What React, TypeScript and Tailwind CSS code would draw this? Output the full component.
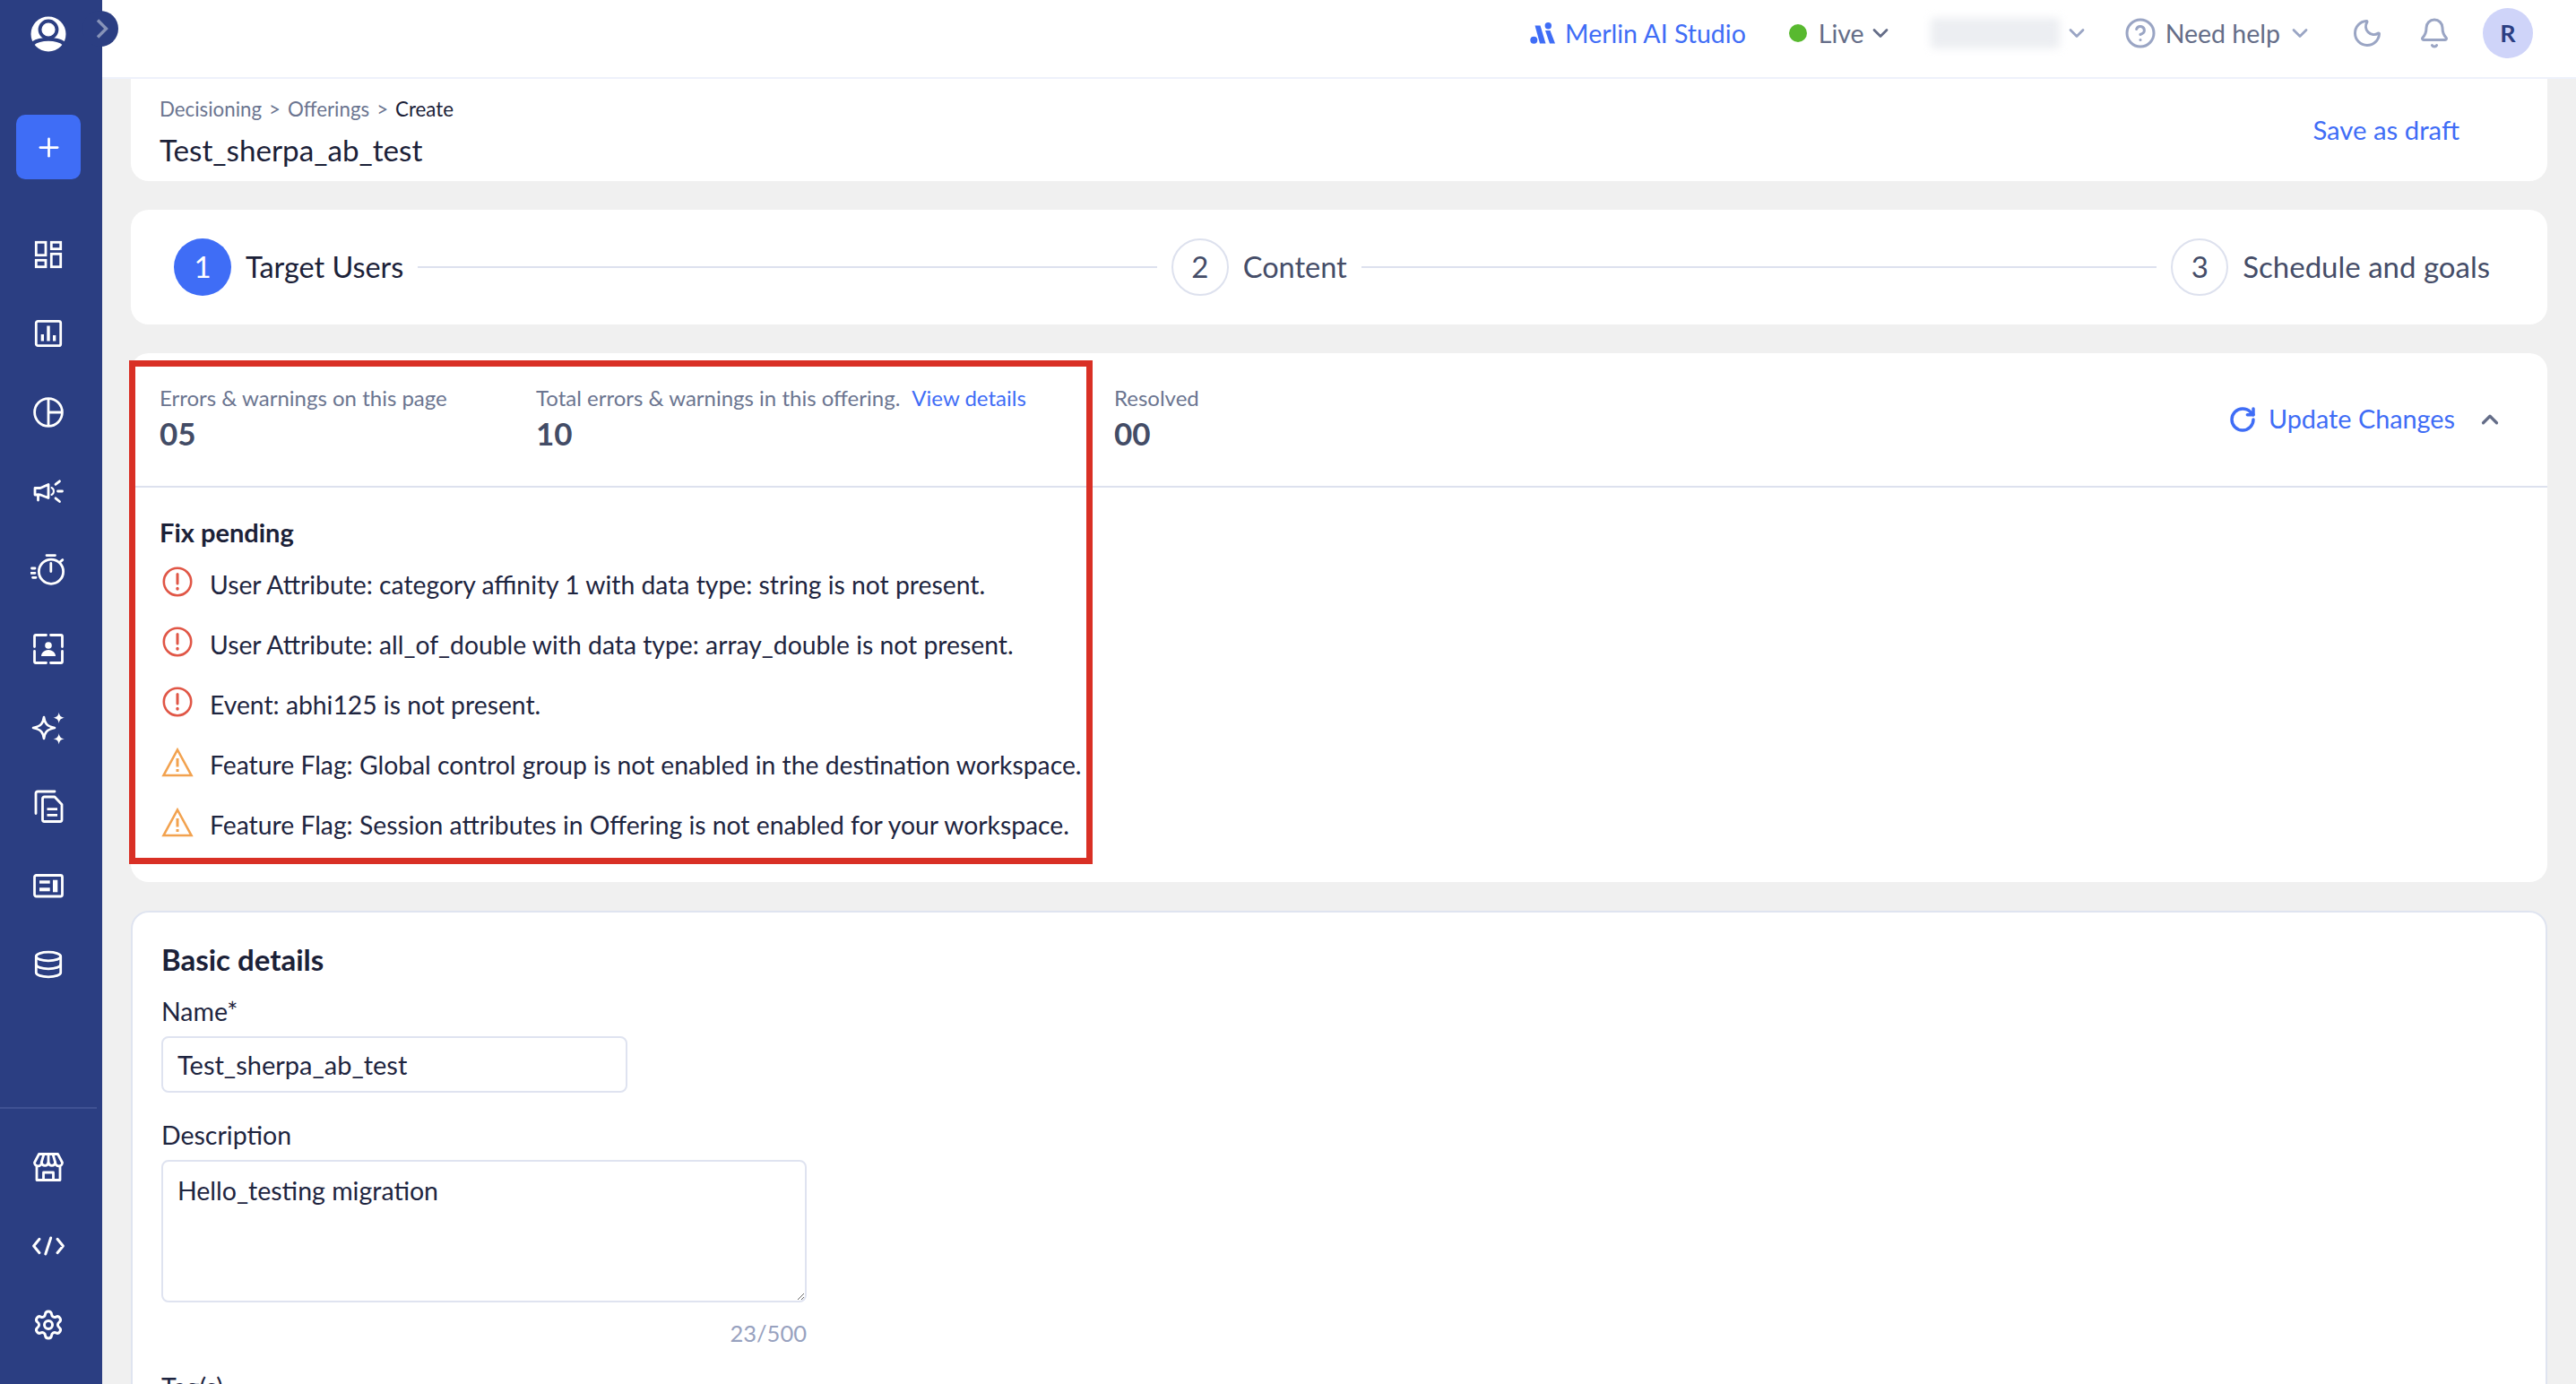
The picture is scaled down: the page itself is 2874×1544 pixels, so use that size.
import React from 'react';
import { ChevronDown, ChevronUp, CircleHelp, Moon, Bell, RotateCw, Plus, Settings } from 'lucide-react';

const Ico: React.FC<{ children: React.ReactNode }> = ({ children }) => (
  <svg width="40" height="40" viewBox="0 0 40 40" fill="none" stroke="white" strokeWidth="2.8" strokeLinecap="round" strokeLinejoin="round">
    {children}
  </svg>
);

const UserLogo = () => (
  <svg width="40" height="40" viewBox="0 0 40 40">
    <circle cx="20" cy="20" r="19.5" fill="white" />
    <circle cx="20" cy="15" r="9.5" fill="white" stroke="#2b3e82" strokeWidth="3.8" />
    <path d="M3 31.5 C11 25 29 25 37 31.5 L37 29 C30 24 10 24 3 29 Z" fill="#2b3e82" stroke="#2b3e82" strokeWidth="2.4" />
  </svg>
);

const topIcons: React.ReactNode[] = [
  <Ico key="dash">
    <g strokeLinecap="butt" strokeLinejoin="miter">
      <rect x="6.3" y="6.3" width="10.7" height="14.4" />
      <rect x="6.3" y="26.3" width="10.7" height="7.4" />
      <rect x="23.3" y="6.3" width="10.4" height="7.4" />
      <rect x="23.3" y="19.3" width="10.4" height="14.4" />
    </g>
  </Ico>,
  <Ico key="bars">
    <rect x="6.3" y="6.3" width="27.4" height="27.4" rx="2" />
    <g fill="white" stroke="none">
      <rect x="11.7" y="21" width="3.3" height="7.5" />
      <rect x="18.3" y="11.5" width="3.4" height="17" />
      <rect x="25" y="22" width="3.3" height="6.5" />
    </g>
  </Ico>,
  <Ico key="pie">
    <circle cx="20" cy="20" r="15.4" />
    <path d="M20 5 V35 M20 20 H35" strokeLinecap="butt" />
  </Ico>,
  <Ico key="mega">
    <path d="M5 16.5 H11 L20 12.5 V27.5 L11 24 H5 Z" />
    <path d="M8.5 24 V30" />
    <path d="M23.5 16 a4.5 4.5 0 0 1 0 8" strokeWidth="2" />
    <path d="M28 12.3 L32.5 8.8 M30.5 20 H35.5 M28 27.8 L32.5 31.5" />
  </Ico>,
  <Ico key="timer">
    <circle cx="23" cy="21.7" r="13.6" />
    <path d="M18 3.6 H27.5 M22.8 12.5 V21.5 M33 10.8 L35.8 8.6" />
    <path d="M1.5 18 H5 M0.8 23.3 H5 M2.5 28.3 H6" />
  </Ico>,
  <Ico key="scan">
    <path d="M17.5 4.5 H6 a1.5 1.5 0 0 0 -1.5 1.5 V17.5" />
    <path d="M22.5 4.5 H34 a1.5 1.5 0 0 1 1.5 1.5 V17.5" />
    <path d="M4.5 22.5 V34 a1.5 1.5 0 0 0 1.5 1.5 H17.5" />
    <path d="M35.5 22.5 V34 a1.5 1.5 0 0 1 -1.5 1.5 H22.5" />
    <circle cx="20" cy="16" r="3.8" fill="white" stroke="none" />
    <path d="M12 28 c0 -4 4 -7 8 -7 s8 3 8 7 Z" fill="white" stroke="none" />
  </Ico>,
  <Ico key="spark">
    <path d="M15 8 C16 15 18 18 27 20 C18 22 16 25 15 32 C14 25 12 22 3 20 C12 18 14 15 15 8 Z" strokeWidth="2.6" />
    <path d="M31.7 2.5 C32.2 6.5 34 8.2 38 8.7 C34 9.2 32.2 11 31.7 15 C31.2 11 29.4 9.2 25.4 8.7 C29.4 8.2 31.2 6.5 31.7 2.5 Z" fill="white" stroke="none" />
    <path d="M31.7 26 C32.2 30 34 31.8 38 32.3 C34 32.8 32.2 34.6 31.7 38.6 C31.2 34.6 29.4 32.8 25.4 32.3 C29.4 31.8 31.2 30 31.7 26 Z" fill="white" stroke="none" />
  </Ico>,
  <Ico key="docs">
    <path d="M27 3 H8 a2 2 0 0 0 -2 2 V27.5" />
    <path d="M13.5 11 a2 2 0 0 1 2 -2 H27 L35 17.5 V34.5 a2 2 0 0 1 -2 2 H15.5 a2 2 0 0 1 -2 -2 Z" />
    <path d="M18.5 22.7 H30 M18.5 29.3 H30" strokeLinecap="butt" />
  </Ico>,
  <Ico key="card">
    <rect x="4.5" y="8.5" width="31" height="23.5" rx="2" />
    <g fill="white" stroke="none">
      <rect x="10" y="14.3" width="11.7" height="3.4" />
      <rect x="10" y="22.3" width="11.7" height="4" />
      <rect x="25" y="13.7" width="5.3" height="13.6" />
    </g>
  </Ico>,
  <Ico key="db">
    <ellipse cx="20" cy="11" rx="13.7" ry="4.8" />
    <path d="M6.3 11 V29 c0 2.7 6.1 4.8 13.7 4.8 s13.7 -2.1 13.7 -4.8 V11" />
    <path d="M6.3 20 c0 2.7 6.1 4.8 13.7 4.8 s13.7 -2.1 13.7 -4.8" />
  </Ico>,
];

const bottomIcons: React.ReactNode[] = [
  <Ico key="store">
    <path d="M9.5 5.5 H30.5 L35.5 15 a3.9 3.9 0 0 1 -7.8 0 a3.9 3.9 0 0 1 -7.7 0 a3.9 3.9 0 0 1 -7.7 0 a3.9 3.9 0 0 1 -7.8 0 Z" />
    <path d="M15 5.5 L12.2 15 M20 5.5 V15 M25 5.5 L27.7 15" />
    <path d="M7 20 V34.5 H33 V20 M14.5 34.5 V26 H25.5 V34.5" />
  </Ico>,
  <Ico key="code">
    <path d="M10 12.3 L3.6 20 L10 27.7 M30 12.3 L36.4 20 L30 27.7 M22.7 11 L16.8 29" strokeWidth="3" />
  </Ico>,
  <Settings key="gear" size={36} color="white" strokeWidth={2} />,
];

const SideCell: React.FC<{ children: React.ReactNode }> = ({ children }) => (
  <div className="flex h-[88px] items-center justify-center">{children}</div>
);

const Sidebar = () => (
  <aside className="relative flex h-full w-[114px] shrink-0 flex-col bg-[#2b3e82]">
    <div className="flex w-[108px] flex-1 flex-col">
      <div className="flex h-[75px] items-center justify-center pr-[1px]">
        <UserLogo />
      </div>
      <div className="mt-[53px] flex justify-center">
        <button className="flex h-[72px] w-[72px] items-center justify-center rounded-[10px] bg-[#3f6df6]">
          <Plus size={33} color="white" strokeWidth={2} />
        </button>
      </div>
      <div className="mt-[40px] flex flex-col">
        {topIcons.map((icon, i) => (
          <SideCell key={i}>{icon}</SideCell>
        ))}
      </div>
      <div className="mt-auto border-t-2 border-[#3f5193] pt-[21px] pb-[22px]">
        {bottomIcons.map((icon, i) => (
          <SideCell key={i}>{icon}</SideCell>
        ))}
      </div>
    </div>
    <div className="absolute left-[92px] top-[12px] flex h-[40px] w-[40px] items-center justify-center rounded-full bg-[#2b3e82]">
      <svg width="16" height="24" viewBox="0 0 16 24" fill="none" stroke="#8793b8" strokeWidth="3.4" className="ml-[4px]">
        <path d="M3 2.5 L12.5 12 L3 21.5" />
      </svg>
    </div>
  </aside>
);

const MerlinMark = () => (
  <svg width="30" height="24" viewBox="0 0 30 24" fill="#3f6df6">
    <circle cx="5.3" cy="19.7" r="4" />
    <polygon points="6.5,3.5 12.5,3.5 18.5,23.5 12,23.5" />
    <circle cx="21.3" cy="3.8" r="3.7" />
    <polygon points="18,9 23.5,9 29,23.5 23,23.5" />
  </svg>
);

const Header = () => (
  <header className="flex h-[88px] shrink-0 items-start border-b-2 border-[#eef1fb] bg-white pr-[48px] text-[28.5px] leading-[36px]">
    <div className="ml-auto flex h-[74px] items-center">
      <MerlinMark />
      <span className="ml-[10px] text-[#3f6df6]">Merlin AI Studio</span>
      <span className="ml-[48px] h-[20px] w-[20px] rounded-full bg-[#58b92f]" />
      <span className="ml-[13px] text-[#646d88]">Live</span>
      <ChevronDown className="ml-[4px]" size={28} color="#646d88" strokeWidth={2.4} />
      <div className="ml-[42px] h-[34px] w-[144px] rounded-[4px] bg-[#eceef2] blur-[5px]" />
      <ChevronDown className="ml-[5px]" size={28} color="#9aa5c4" strokeWidth={2.4} />
      <CircleHelp className="ml-[39px]" size={36} color="#9aa5c4" strokeWidth={2} />
      <span className="ml-[10px] text-[#646d88]">Need help</span>
      <ChevronDown className="ml-[8px]" size={28} color="#9aa5c4" strokeWidth={2.4} />
      <Moon className="ml-[43px]" size={36} color="#9aa5c4" strokeWidth={2} />
      <Bell className="ml-[39px]" size={36} color="#9aa5c4" strokeWidth={2} />
      <div className="ml-[36px] flex h-[56px] w-[56px] items-center justify-center rounded-full bg-[#cfd4f9] text-[27px] font-bold text-[#2b3e82]">
        R
      </div>
    </div>
  </header>
);

const Step: React.FC<{ n: number; label: string; active?: boolean; textClass: string }> = ({ n, label, active, textClass }) => (
  <div className="flex items-center">
    <div
      className={
        active
          ? 'flex h-[64px] w-[64px] items-center justify-center rounded-full bg-[#3f6df6] text-[33px] text-white'
          : 'flex h-[64px] w-[64px] items-center justify-center rounded-full border-2 border-[#dde1ee] text-[33px] text-[#454d68]'
      }
    >
      {n}
    </div>
    <span className={`ml-[16px] ${textClass} ${active ? 'text-[#1b2138]' : 'text-[#454d68]'}`}>{label}</span>
  </div>
);

const ErrorIcon = () => (
  <svg width="36" height="36" viewBox="0 0 36 36" fill="none" stroke="#e05646" strokeWidth="2.6" strokeLinecap="round">
    <circle cx="18" cy="18" r="15.2" />
    <path d="M18 9.5 V20" strokeWidth="3" />
    <path d="M18 25.5 V26" strokeWidth="3.4" />
  </svg>
);

const WarnIcon = () => (
  <svg width="36" height="36" viewBox="0 0 36 36" fill="none" stroke="#f2a24f" strokeWidth="2.6" strokeLinejoin="miter" className="mt-[2px]">
    <path d="M18 3.5 L33.5 32 H2.5 Z" />
    <path d="M18 13 V22.5" strokeWidth="3" />
    <path d="M18 25 V28" strokeWidth="3" />
  </svg>
);

const issues: { kind: 'error' | 'warn'; text: string }[] = [
  { kind: 'error', text: 'User Attribute: category affinity 1 with data type: string is not present.' },
  { kind: 'error', text: 'User Attribute: all_of_double with data type: array_double is not present.' },
  { kind: 'error', text: 'Event: abhi125 is not present.' },
  { kind: 'warn', text: 'Feature Flag: Global control group is not enabled in the destination workspace.' },
  { kind: 'warn', text: 'Feature Flag: Session attributes in Offering is not enabled for your workspace.' },
];

const Stat: React.FC<{ label: React.ReactNode; value: string; className: string }> = ({ label, value, className }) => (
  <div className={className}>
    <div className="text-[24px] leading-[30px] text-[#6b7590]">{label}</div>
    <div className="mt-[4px] text-[35px] font-bold leading-[40px] text-[#434c66]">{value}</div>
  </div>
);

export default function App() {
  return (
    <div className="flex h-screen w-full overflow-hidden bg-[#f0f0f0] font-['Lato',sans-serif]">
      <Sidebar />
      <main className="flex h-full min-w-0 flex-1 flex-col overflow-hidden">
        <Header />
        <div className="flex flex-col px-[32px]">
          <section className="flex h-[114px] items-start justify-between rounded-b-[20px] bg-white pl-[32px] pr-[98px]">
            <div>
              <div className="mt-[20px] flex items-center text-[22.3px] leading-[28px] text-[#6b7590]">
                <span>Decisioning</span>
                <span className="mx-[8px]">&gt;</span>
                <span>Offerings</span>
                <span className="mx-[8px]">&gt;</span>
                <span className="text-[#1b2138]">Create</span>
              </div>
              <div className="mt-[11px] text-[33.2px] leading-[40px] text-[#1b2138]">Test_sherpa_ab_test</div>
            </div>
            <button className="mt-[39px] text-[29.3px] leading-[36px] text-[#3f6df6]">Save as draft</button>
          </section>

          <section className="mt-[32px] flex h-[128px] items-center rounded-[20px] bg-white pl-[48px] pr-[64px]">
            <Step n={1} label="Target Users" active textClass="text-[32.4px]" />
            <div className="mx-[16px] h-[2px] grow-[824] basis-0 bg-[#dde1ee]" />
            <Step n={2} label="Content" textClass="text-[32.5px]" />
            <div className="mx-[16px] h-[2px] grow-[887] basis-0 bg-[#dde1ee]" />
            <Step n={3} label="Schedule and goals" textClass="text-[33px]" />
          </section>

          <section className="relative mt-[32px] h-[590px] rounded-[20px] bg-white">
            <div className="flex h-[150px] border-b-2 border-[#dde1ee] pl-[32px] pr-[49px] pt-[35px]">
              <Stat className="w-[420px]" label="Errors & warnings on this page" value="05" />
              <Stat
                className="w-[645px]"
                label={
                  <>
                    Total errors &amp; warnings in this offering.<span className="ml-[13px] text-[#3f6df6]">View details</span>
                  </>
                }
                value="10"
              />
              <Stat className="" label="Resolved" value="00" />
              <div className="ml-auto flex h-[78px] items-center">
                <RotateCw size={32} color="#3f6df6" strokeWidth={2.6} />
                <span className="ml-[13px] text-[28.8px] text-[#3f6df6]">Update Changes</span>
                <ChevronUp className="ml-[24px]" size={30} color="#646d88" strokeWidth={2.6} />
              </div>
            </div>
            <div className="pl-[32px] pt-[32px]">
              <div className="text-[29px] font-bold leading-[36px] text-[#1b2138]">Fix pending</div>
              <div className="mt-[3px] flex flex-col">
                {issues.map((issue) => (
                  <div key={issue.text} className="flex h-[67px] items-center text-[28.3px] text-[#1e2540]">
                    <div className="ml-[2px] w-[38px] shrink-0">{issue.kind === 'error' ? <ErrorIcon /> : <WarnIcon />}</div>
                    <span className="ml-[16px] pt-[8px]">{issue.text}</span>
                  </div>
                ))}
              </div>
            </div>
            <div className="pointer-events-none absolute left-[-2px] top-[8px] h-[562px] w-[1075px] border-[7px] border-[#d93025]" />
          </section>

          <section className="mt-[32px] rounded-[20px] border-2 border-[#dfe4f0] bg-white pb-[40px] pl-[32px]">
            <h2 className="mt-[33px] text-[33px] font-bold leading-[38px] text-[#1b2138]">Basic details</h2>
            <label className="mt-[21px] block text-[28.5px] leading-[36px] text-[#1e2540]">Name*</label>
            <input
              readOnly
              defaultValue="Test_sherpa_ab_test"
              className="mt-[10px] block h-[63px] w-[520px] rounded-[8px] border-2 border-[#dfe3f0] px-[16px] text-[29px] text-[#1e2540] outline-none"
            />
            <label className="mt-[29px] block text-[28.5px] leading-[36px] text-[#1e2540]">Description</label>
            <textarea
              readOnly
              defaultValue="Hello_testing migration"
              className="mt-[10px] block h-[159px] w-[720px] resize rounded-[8px] border-2 border-[#dfe3f0] px-[16px] py-[14px] text-[28.5px] leading-[36px] text-[#1e2540] outline-none"
            />
            <div className="mt-[19px] w-[720px] text-right text-[25.5px] leading-[30px] text-[#98a2bf]">23/500</div>
            <label className="mt-[27px] block text-[28.5px] leading-[36px] text-[#1e2540]">Tag(s)</label>
          </section>
        </div>
      </main>
    </div>
  );
}
